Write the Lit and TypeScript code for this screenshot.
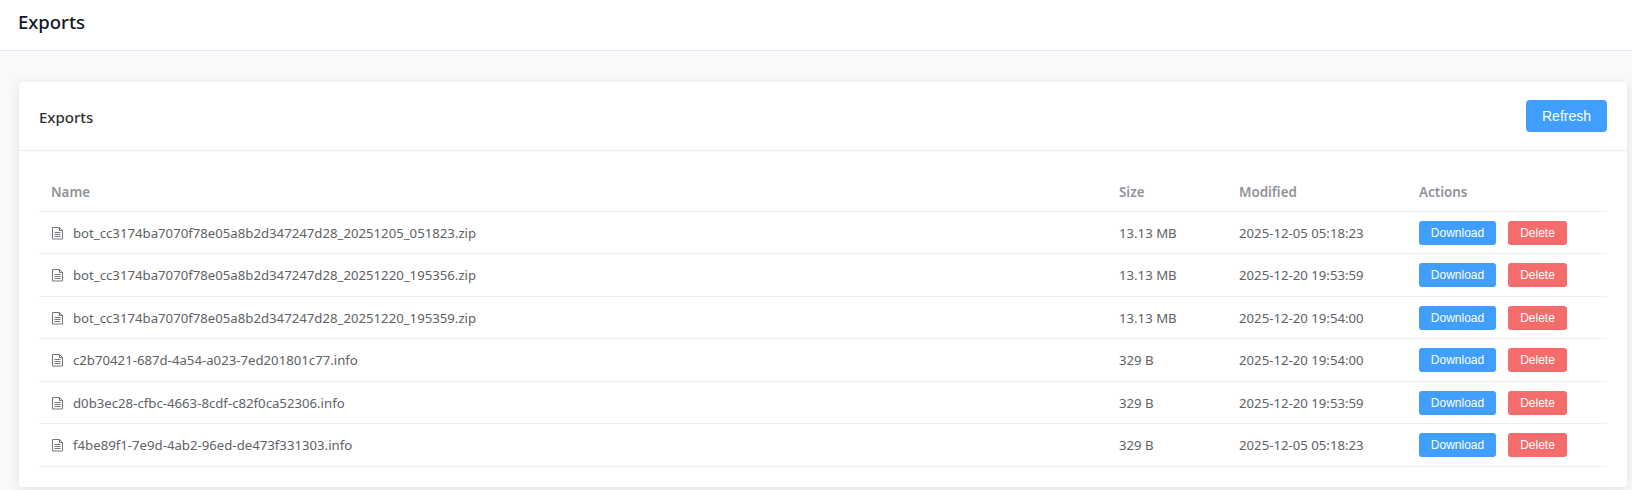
import { css, html, LitElement } from "lit";
import { customElement } from "lit/decorators.js";

interface ExportFile {
  name: string;
  size: string;
  modified: string;
}

const FILES: ExportFile[] = [
  { name: "bot_cc3174ba7070f78e05a8b2d347247d28_20251205_051823.zip", size: "13.13 MB", modified: "2025-12-05 05:18:23" },
  { name: "bot_cc3174ba7070f78e05a8b2d347247d28_20251220_195356.zip", size: "13.13 MB", modified: "2025-12-20 19:53:59" },
  { name: "bot_cc3174ba7070f78e05a8b2d347247d28_20251220_195359.zip", size: "13.13 MB", modified: "2025-12-20 19:54:00" },
  { name: "c2b70421-687d-4a54-a023-7ed201801c77.info", size: "329 B", modified: "2025-12-20 19:54:00" },
  { name: "d0b3ec28-cfbc-4663-8cdf-c82f0ca52306.info", size: "329 B", modified: "2025-12-20 19:53:59" },
  { name: "f4be89f1-7e9d-4ab2-96ed-de473f331303.info", size: "329 B", modified: "2025-12-05 05:18:23" },
];

@customElement("app-root")
export class AppRoot extends LitElement {
  static styles = css`
    :host {
      display: block;
      height: 490px;
      overflow: hidden;
      background: #f8f9fb;
      font-family: "Noto Sans", "Open Sans", sans-serif;
      font-size: 13.2px;
      color: #606266;
    }

    .topbar {
      height: 51px;
      box-sizing: border-box;
      background: #fff;
      border-bottom: 1px solid #e4e7ed;
      padding: 0 18px;
      display: flex;
      align-items: center;
    }

    .topbar h1 {
      margin: 0 0 7px;
      font-size: 18.5px;
      font-weight: 500;
      color: #111827;
    }

    .content {
      padding: 31px 5px 0 19px;
    }

    .card {
      background: #fff;
      border-radius: 4px;
      box-shadow: 0 2px 12px rgba(0, 0, 0, 0.1);
    }

    .card-header {
      height: 69px;
      box-sizing: border-box;
      border-bottom: 1px solid #ebeef5;
      padding: 0 20px;
      display: flex;
      align-items: center;
      justify-content: space-between;
    }

    .card-header h2 {
      margin: 1px 0 0;
      font-size: 15px;
      font-weight: 500;
      color: #303133;
    }

    .card-body {
      padding: 20px;
    }

    table {
      width: 100%;
      border-collapse: collapse;
      table-layout: fixed;
    }

    th {
      box-sizing: border-box;
      height: 40px;
      padding: 2px 12px 0;
      text-align: left;
      font-size: 13.4px;
      font-weight: 600;
      color: #909399;
      border-bottom: 1px solid #ebeef5;
    }

    td {
      height: 42.5px;
      box-sizing: border-box;
      padding: 1px 12px 0;
      border-bottom: 1px solid #ebeef5;
      white-space: nowrap;
    }

    .col-size {
      width: 120px;
    }

    .col-modified {
      width: 180px;
    }

    .col-actions {
      width: 200px;
    }

    .name {
      display: flex;
      align-items: center;
      gap: 8px;
    }

    .name svg {
      width: 14px;
      height: 14px;
      flex: none;
    }

    .actions {
      display: flex;
      gap: 12px;
    }

    button {
      border: 0;
      color: #fff;
      font-family: "Liberation Sans", Arial, sans-serif;
      border-radius: 3px;
      padding: 0;
      height: 24px;
      font-size: 12px;
    }

    .primary {
      background: #409eff;
    }

    .danger {
      background: #f56c6c;
    }

    .download {
      width: 77px;
    }

    .delete {
      width: 59px;
    }

    .refresh {
      width: 81px;
      height: 32px;
      font-size: 14px;
      border-radius: 4px;
    }
  `;

  private renderIcon() {
    return html`
      <svg viewBox="0 0 14 14" fill="none" stroke="#75777c" stroke-width="1">
        <path d="M1.5 1.5h7l3 3v8.500h-10z" />
        <path d="M8.500 1.500v3h3M3.500 6.500h6M3.500 8.500h6M3.500 10.500h6" />
      </svg>
    `;
  }

  private renderRow(file: ExportFile) {
    return html`
      <tr>
        <td>
          <div class="name">${this.renderIcon()}<span>${file.name}</span></div>
        </td>
        <td>${file.size}</td>
        <td>${file.modified}</td>
        <td>
          <div class="actions">
            <button class="primary download">Download</button>
            <button class="danger delete">Delete</button>
          </div>
        </td>
      </tr>
    `;
  }

  render() {
    return html`
      <header class="topbar"><h1>Exports</h1></header>
      <div class="content">
        <section class="card">
          <div class="card-header">
            <h2>Exports</h2>
            <button class="primary refresh">Refresh</button>
          </div>
          <div class="card-body">
            <table>
              <thead>
                <tr>
                  <th>Name</th>
                  <th class="col-size">Size</th>
                  <th class="col-modified">Modified</th>
                  <th class="col-actions">Actions</th>
                </tr>
              </thead>
              <tbody>
                ${FILES.map((file) => this.renderRow(file))}
              </tbody>
            </table>
          </div>
        </section>
      </div>
    `;
  }
}
